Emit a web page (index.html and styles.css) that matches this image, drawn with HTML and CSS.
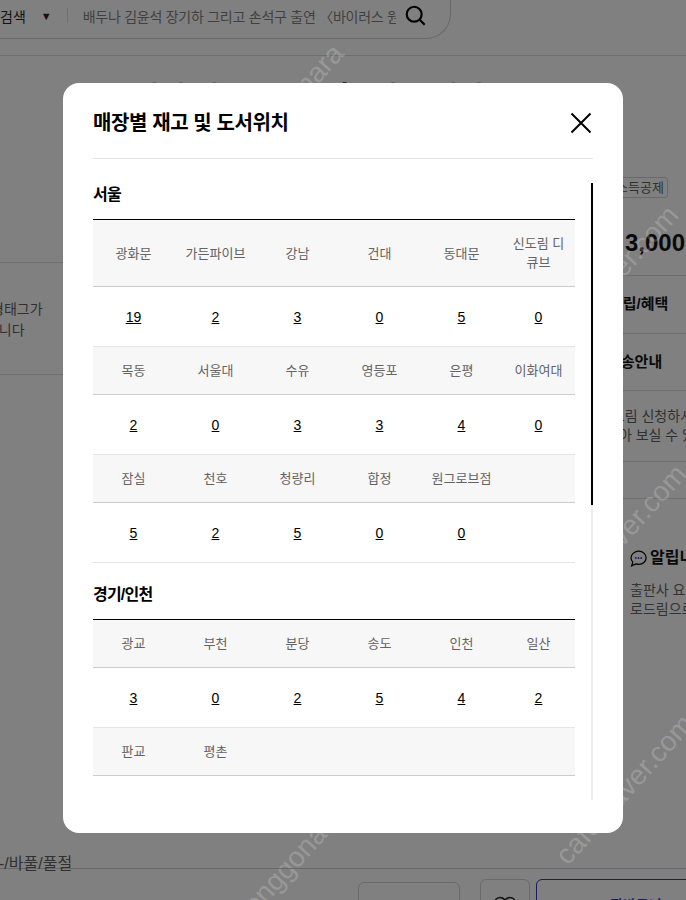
FILE: index.html
```html
<!DOCTYPE html>
<html lang="ko">
<head>
<meta charset="utf-8">
<title>매장별 재고 및 도서위치</title>
<link rel="stylesheet" href="styles.css">
</head>
<body>
<div class="page">
  <header class="top">
    <div class="search">
      <span class="search-type">검색</span>
      <span class="search-caret">▼</span>
      <span class="search-div"></span>
      <span class="search-text">배두나 김윤석 장기하 그리고 손석구 출연 〈바이러스 원작소설〉</span>
      <svg class="search-icon" width="21" height="21" viewBox="0 0 24 24" aria-hidden="true"><circle cx="10.500" cy="10.500" r="8.500" fill="none" stroke="#000" stroke-width="2.500"/><path d="M16.500 16.500l6 6" fill="none" stroke="#000" stroke-width="2.500"/></svg>
    </div>
  </header>

  <main class="body">
    <section class="left">
      <p>형태그가<br>&nbsp;&nbsp;니다</p>
    </section>
    <section class="center">
      <h1>당신이 사랑을 시작할 때 우리가</h1>
    </section>
    <aside class="right">
      <span class="tag">소득공제</span>
      <div class="price">3,000</div>
      <div class="row">적립/혜택</div>
      <div class="row row-b">배송안내</div>
      <div class="note">바로드림 신청하시면<br>찾아 보실 수 있습니다</div>
      <div class="empty-row"></div>
      <div class="notice">
        <h4><svg width="17" height="17" viewBox="0 0 17 17" aria-hidden="true"><path d="M8.800 1.200c4 0 7.300 2.900 7.300 6.600s-3.300 6.600-7.300 6.600c-1 0-2-.2-2.900-.5L1.600 15.800l1.200-3.600C1.600 11 1 9.500 1 7.800 1 4.100 4.700 1.200 8.800 1.200z" fill="none" stroke="#000" stroke-width="1.200"/><circle cx="5.800" cy="8" r=".9" fill="#1d1d6b"/><circle cx="8.500" cy="8" r=".9" fill="#1d1d6b"/><circle cx="11.200" cy="8" r=".9" fill="#1d1d6b"/></svg>알립니다</h4>
        <p>출판사 요청으로<br>로드림으로</p>
      </div>
    </aside>
  </main>

  <span class="wm wm-j1">joonggonara</span>
  <span class="wm wm-j2">joonggonara</span>
  <span class="wm wm-c1">cafe.naver.com</span>
  <span class="wm wm-c2">cafe.naver.com</span>
  <span class="wm wm-c3">cafe.naver.com</span>

  <footer class="bottom">
    <div class="crumb">-/바풀/풀절</div>
    <div class="actions">
      <button class="btn btn-gift">선물하기</button>
      <button class="btn btn-heart" aria-label="찜"><svg width="24" height="22" viewBox="0 0 24 22" aria-hidden="true"><path d="M12 20C5 15 2 11.500 2 7.500 2 4.500 4.300 2.500 7 2.500c2 0 3.900 1 5 3 1.100-2 3-3 5-3 2.700 0 5 2 5 5 0 4-3 7.500-10 12.500z" fill="none" stroke="#111" stroke-width="1.500"/></svg></button>
      <button class="btn btn-cart">장바구니</button>
    </div>
  </footer>

  <div class="modal" role="dialog" aria-label="매장별 재고 및 도서위치">
    <div class="modal-head">
      <h2>매장별 재고 및 도서위치</h2>
      <svg class="close" width="22" height="22" viewBox="0 0 22 22" aria-hidden="true"><path d="M1.500 1.500l19 19M20.500 1.500l-19 19" fill="none" stroke="#000" stroke-width="2"/></svg>
    </div>
    <div class="scroller">
      <div class="stock">
        <h3>서울</h3>
        <table>
          <colgroup><col class="c"><col class="c"><col class="c"><col class="c"><col class="c"><col class="c-last"></colgroup>
          <tr><th>광화문</th><th>가든파이브</th><th>강남</th><th>건대</th><th>동대문</th><th>신도림 디큐브</th></tr>
          <tr><td><a href="#">19</a></td><td><a href="#">2</a></td><td><a href="#">3</a></td><td><a href="#">0</a></td><td><a href="#">5</a></td><td><a href="#">0</a></td></tr>
          <tr><th>목동</th><th>서울대</th><th>수유</th><th>영등포</th><th>은평</th><th>이화여대</th></tr>
          <tr><td><a href="#">2</a></td><td><a href="#">0</a></td><td><a href="#">3</a></td><td><a href="#">3</a></td><td><a href="#">4</a></td><td><a href="#">0</a></td></tr>
          <tr><th>잠실</th><th>천호</th><th>청량리</th><th>합정</th><th>원그로브점</th><th></th></tr>
          <tr><td><a href="#">5</a></td><td><a href="#">2</a></td><td><a href="#">5</a></td><td><a href="#">0</a></td><td><a href="#">0</a></td><td></td></tr>
        </table>
        <h3 class="next">경기/인천</h3>
        <table>
          <colgroup><col class="c"><col class="c"><col class="c"><col class="c"><col class="c"><col class="c-last"></colgroup>
          <tr><th>광교</th><th>부천</th><th>분당</th><th>송도</th><th>인천</th><th>일산</th></tr>
          <tr><td><a href="#">3</a></td><td><a href="#">0</a></td><td><a href="#">2</a></td><td><a href="#">5</a></td><td><a href="#">4</a></td><td><a href="#">2</a></td></tr>
          <tr><th>판교</th><th>평촌</th><th></th><th></th><th></th><th></th></tr>
        </table>
      </div>
      <div class="track"><div class="thumb"></div></div>
    </div>
  </div>
</div>
</body>
</html>
```
FILE: styles.css
```css
* { box-sizing: border-box; }
html, body { margin: 0; padding: 0; }
body { font-family: "Liberation Sans", "Noto Sans CJK KR", sans-serif; color: #000; }
.page { position: relative; width: 686px; height: 900px; overflow: hidden; background: #808080; }

.top { height: 57px; border-bottom: 1px solid #6f6f6f; }
.search { display: flex; align-items: center; width: 451px; height: 40px; margin-top: -1px; padding-bottom: 6px; border-right: 1px solid #686868; border-bottom: 1px solid #686868; border-radius: 0 0 25px 0; }
.search-type { font-size: 14px; color: #111; }
.search-caret { font-size: 11px; margin-left: 15px; color: #111; }
.search-div { width: 1px; height: 15px; background: #6f6f6f; margin: 0 15px 0 15px; }
.search-text { width: 313px; flex: none; overflow: hidden; white-space: nowrap; font-size: 14px; letter-spacing: -.25px; color: #404040; }
.search-icon { margin-left: 9px; flex: none; }

.body { display: flex; height: 811px; }
.left { width: 110px; flex: none; height: 113px; margin-top: 206px; border-top: 1px solid #6f6f6f; border-bottom: 1px solid #6f6f6f; padding-top: 36px; overflow: hidden; }
.left p { margin: 0 0 0 -9px; font-size: 14px; line-height: 21px; color: #303030; white-space: nowrap; }
.center { width: 480px; flex: none; }
.center h1 { margin: 22px 0 0 -4px; font-size: 29px; line-height: 40px; color: #111; white-space: nowrap; }
.right { width: 330px; flex: none; padding-top: 121px; margin-left: 10px; }
.tag { display: block; width: fit-content; height: 21px; margin-left: 12px; padding: 0 3px; border: 1px solid #6a6a6a; border-radius: 3px; font-size: 13px; line-height: 19px; color: #303030; }
.price { height: 77px; margin: 0; padding: 27px 0 0 25px; font-size: 24px; font-weight: 700; line-height: 36px; color: #0a0a0a; }
.row { height: 58px; border-top: 1px solid #6f6f6f; font-size: 15px; font-weight: 700; line-height: 56px; color: #0a0a0a; text-indent: 9px; }
.row-b { height: 57px; text-indent: 7px; }
.note { height: 71px; padding: 16px 0 0 6px; border-top: 1px solid #6f6f6f; font-size: 14px; line-height: 19px; color: #303030; text-indent: -20px; white-space: nowrap; }
.empty-row { height: 38px; border-top: 1px solid #6f6f6f; border-bottom: 1px solid #6f6f6f; }
.notice { padding: 49px 0 0 30px; }
.notice h4 { display: flex; align-items: center; gap: 3px; margin: 0; font-size: 16px; line-height: 20px; color: #0a0a0a; white-space: nowrap; }
.notice p { margin: 13px 0 0; font-size: 14px; line-height: 19px; color: #333; white-space: nowrap; }

.wm { position: absolute; height: 32px; font-size: 28px; line-height: 32px; color: rgba(255,255,255,.21); white-space: nowrap; transform: rotate(-48deg); transform-origin: 0 100%; }
.wm-j1 { left: 246px; top: 143px; }
.wm-j2 { left: 246px; top: 905px; }
.wm-c1 { left: 558px; top: 330px; }
.wm-c2 { left: 566px; top: 589px; }
.wm-c3 { left: 573px; top: 839px; }

.bottom { position: absolute; left: 0; right: 0; top: 852px; height: 48px; }
.crumb { height: 17px; font-size: 16px; line-height: 23px; color: #303030; border-bottom: 1px solid #686868; white-space: nowrap; margin-left: -1px; }
.actions { display: flex; align-items: flex-start; padding: 10px 0 0 358px; }
.btn { flex: none; background: transparent; border: 1px solid #6a6a6a; border-radius: 6px; font: 700 14px "Liberation Sans", "Noto Sans CJK KR", sans-serif; color: #111; }
.btn-gift { width: 102px; height: 50px; margin-top: 3px; padding: 0 0 3px 16px; font-weight: 400; }
.btn-heart { width: 50px; height: 50px; margin-left: 20px; padding: 6px 0 0; }
.btn-cart { width: 200px; height: 50px; margin-left: 6px; padding: 0; border-color: #1c1c66; color: #1c1c66; }

.modal { position: absolute; left: 63px; top: 83px; width: 560px; height: 750px; display: flex; flex-direction: column; padding: 0 30px; background: #fff; border-radius: 16px; }
.modal-head { display: flex; justify-content: space-between; align-items: center; flex: none; height: 76px; padding-top: 4px; border-bottom: 1px solid #e4e4e4; }
.modal-head h2 { margin: 0; font-size: 20px; font-weight: 700; line-height: 28px; letter-spacing: -.4px; }
.close { margin-right: 1px; }
.scroller { position: relative; height: 617px; margin-top: 24px; overflow: hidden; }
.track { position: absolute; top: 0; right: 0; width: 2px; height: 617px; background: #eee; }
.thumb { height: 322px; background: #000; }
.stock { width: 482px; }
.stock h3 { margin: 0 0 14px; padding-top: 1px; height: 22px; font-size: 16px; font-weight: 700; line-height: 22px; letter-spacing: -.8px; }
.stock h3.next { margin-top: 20px; }
table { width: 482px; table-layout: fixed; border-collapse: separate; border-spacing: 0; border-top: 1px solid #000; }
.c { width: 82px; }
.c-last { width: 72px; }
th { padding: 14px 9px 14px 8px; background: #f7f7f7; border-bottom: 1px solid #ccc; font-size: 13px; font-weight: 400; line-height: 19px; color: #636363; }
th:not(:last-child) { padding: 14px 2px 14px 1px; }
td { padding: 21px 5px 19px 4px; border-bottom: 1px solid #e5e5e5; font-size: 14px; line-height: 19px; text-align: center; }
td a { color: #000; }
```
